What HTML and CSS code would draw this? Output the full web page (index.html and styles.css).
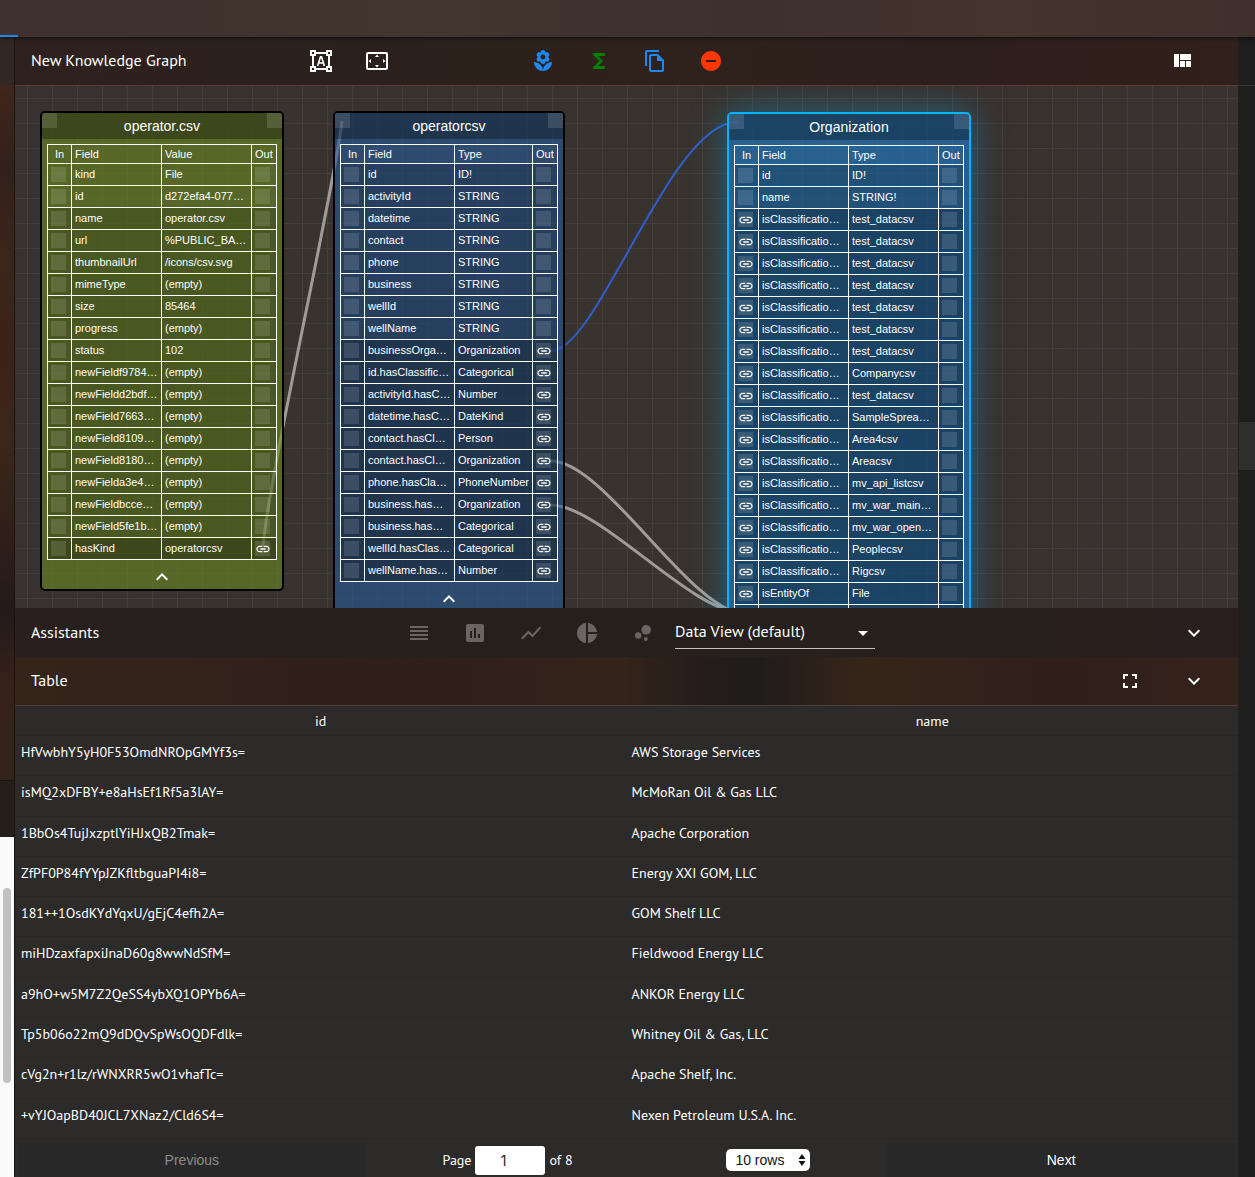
FILE: index.html
```html
<!DOCTYPE html>
<html lang="en">
<head>
<meta charset="utf-8">
<title>New Knowledge Graph</title>
<link rel="stylesheet" href="styles.css">
</head>
<body>
<svg class="sprite" aria-hidden="true">
  <symbol id="i-shape" viewBox="0 0 24 24"><path fill="none" stroke="currentColor" stroke-width="2" d="M2 2h4v4H2zM18 2h4v4h-4zM2 18h4v4H2zM18 18h4v4h-4zM6 4h12M6 20h12M4 6v12M20 6v12"/><path fill="none" stroke="currentColor" stroke-width="1.6" d="M8.600 17 11.500 7.800h1L15.400 17M9.700 14h4.600"/></symbol>
  <symbol id="i-overscan" viewBox="0 0 24 24"><path d="M12.010 5.500L10 8h4l-1.990-2.500zM18 10v4l2.500-1.990L18 10zM6 10l-2.500 2.010L6 14v-4zm8 6h-4l2.010 2.500L14 16zm7-13H3c-1.100 0-2 .9-2 2v14c0 1.100.9 2 2 2h18c1.100 0 2-.9 2-2V5c0-1.100-.9-2-2-2zm0 16.010H3V4.990h18v14.020z"/></symbol>
  <symbol id="i-flower" viewBox="0 0 24 24"><path d="M12 22c4.970 0 9-4.030 9-9-4.970 0-9 4.030-9 9zM5.600 10.250c0 1.380 1.120 2.500 2.500 2.500.53 0 1.010-.16 1.420-.44l-.02.19c0 1.380 1.120 2.500 2.500 2.500s2.500-1.120 2.500-2.500l-.02-.19c.4.28.89.44 1.420.44 1.380 0 2.500-1.120 2.500-2.500 0-1-.59-1.850-1.430-2.250.84-.4 1.430-1.250 1.430-2.250 0-1.380-1.120-2.500-2.500-2.500-.53 0-1.010.16-1.420.44l.02-.19C14.500 2.120 13.380 1 12 1S9.500 2.120 9.500 3.500l.02.19c-.4-.28-.89-.44-1.420-.44-1.380 0-2.500 1.120-2.500 2.500 0 1 .59 1.850 1.430 2.250-.84.4-1.430 1.250-1.430 2.250zM12 5.500c1.380 0 2.500 1.120 2.500 2.500s-1.120 2.500-2.500 2.500S9.500 9.380 9.500 8s1.120-2.500 2.500-2.500zM3 13c0 4.970 4.030 9 9 9 0-4.970-4.030-9-9-9z"/></symbol>
  <symbol id="i-sum" viewBox="0 0 24 24"><path d="M18 4H6v2l6.500 6L6 18v2h12v-3h-7l5-5-5-5h7z"/></symbol>
  <symbol id="i-copy" viewBox="0 0 24 24"><path d="M16 1H4c-1.100 0-2 .9-2 2v14h2V3h12V1zm-1 4H8c-1.100 0-1.990.9-1.990 2L6 21c0 1.100.89 2 1.990 2H19c1.100 0 2-.9 2-2V11l-6-6zM8 21V7h6v5h5v9H8z"/></symbol>
  <symbol id="i-remove" viewBox="0 0 24 24"><path d="M12 2C6.480 2 2 6.480 2 12s4.480 10 10 10 10-4.480 10-10S17.520 2 12 2zm5 11H7v-2h10v2z"/></symbol>
  <symbol id="i-quilt" viewBox="0 0 24 24"><path d="M10 18h5v-6h-5v6zm-6 0h5V5H4v13zm12 0h5v-6h-5v6zM10 5v6h11V5H10z"/></symbol>
  <symbol id="i-lines" viewBox="0 0 24 24"><path d="M3 15h18v-2H3v2zm0 4h18v-2H3v2zm0-8h18V9H3v2zm0-6v2h18V5H3z"/></symbol>
  <symbol id="i-bars" viewBox="0 0 24 24"><path d="M19 3H5c-1.100 0-2 .9-2 2v14c0 1.100.9 2 2 2h14c1.100 0 2-.9 2-2V5c0-1.100-.9-2-2-2zM9 17H7v-7h2v7zm4 0h-2V7h2v10zm4 0h-2v-4h2v4z"/></symbol>
  <symbol id="i-trend" viewBox="0 0 24 24"><path d="M3.500 18.490l6-6.010 4 4L22 6.920l-1.410-1.410-7.090 7.970-4-4L2 16.990z"/></symbol>
  <symbol id="i-pie" viewBox="0 0 24 24"><path d="M11 2v20c-5.070-.5-9-4.790-9-10s3.930-9.500 9-10zm2.030 0v8.990H22c-.47-4.740-4.240-8.520-8.970-8.990zm0 11.010V22c4.740-.47 8.500-4.250 8.970-8.990h-8.970z"/></symbol>
  <symbol id="i-bubbles" viewBox="0 0 24 24"><circle cx="7.200" cy="14.400" r="3.200"/><circle cx="14.800" cy="18" r="2"/><circle cx="15.200" cy="8.800" r="4.800"/></symbol>
  <symbol id="i-full" viewBox="0 0 24 24"><path d="M7 14H5v5h5v-2H7v-3zm-2-4h2V7h3V5H5v5zm12 7h-3v2h5v-5h-2v3zM14 5v2h3v3h2V5h-5z"/></symbol>
  <symbol id="i-more" viewBox="0 0 24 24"><path d="M16.590 8.590L12 13.170 7.410 8.590 6 10l6 6 6-6z"/></symbol>
  <symbol id="i-less" viewBox="0 0 24 24"><path d="M12 8l-6 6 1.410 1.410L12 10.830l4.590 4.580L18 14z"/></symbol>
  <symbol id="i-drop" viewBox="0 0 24 24"><path d="M7 10l5 5 5-5z"/></symbol>
  <symbol id="i-link" viewBox="0 0 24 24"><path d="M3.900 12c0-1.710 1.390-3.100 3.100-3.100h4V7H7c-2.760 0-5 2.240-5 5s2.240 5 5 5h4v-1.900H7c-1.710 0-3.100-1.390-3.100-3.100zM8 13h8v-2H8v2zm9-6h-4v1.900h4c1.710 0 3.100 1.390 3.100 3.100s-1.390 3.100-3.100 3.100h-4V17h4c2.760 0 5-2.240 5-5s-2.240-5-5-5z"/></symbol>
</svg>

<div class="app">
  <div class="topbar"><span class="tab-ink"></span></div>
  <div class="body">
    <aside class="left">
      <div class="left-head"></div>
      <div class="left-main"></div>
      <div class="left-foot"></div>
      <div class="left-list"><span class="thumb"></span></div>
    </aside>

    <main class="main">
      <header class="bar graph-bar">
        <h1 class="title">New Knowledge Graph</h1>
        <div class="tools">
          <button class="icon" aria-label="Select nodes"><svg><use href="#i-shape"/></svg></button>
          <button class="icon" aria-label="Fit to view"><svg><use href="#i-overscan"/></svg></button>
        </div>
        <div class="tools edit-tools">
          <button class="icon blue" aria-label="Add entity"><svg><use href="#i-flower"/></svg></button>
          <button class="icon green" aria-label="Add function"><svg><use href="#i-sum"/></svg></button>
          <button class="icon blue" aria-label="Copy"><svg><use href="#i-copy"/></svg></button>
          <button class="icon red" aria-label="Remove"><svg><use href="#i-remove"/></svg></button>
        </div>
        <button class="icon end" aria-label="Change layout"><svg><use href="#i-quilt"/></svg></button>
      </header>

      <section class="canvas" aria-label="Graph">
        <svg class="edges" aria-hidden="true">
          <path d="M248 460C255 384 322 89 327 35"/>
          <path class="active" d="M536 265C583 265 655 36 722 36"/>
          <path d="M536 375C590 375 675 526 730 528"/>
          <path d="M536 419C585 419 675 526 730 528"/>
        </svg>
        <div class="node file" id="node-file"></div>
        <div class="node kind" id="node-kind"></div>
        <div class="node selected" id="node-organization"></div>
      </section>

      <div class="bar assistants">
        <h2 class="title">Assistants</h2>
        <div class="tools views">
          <button class="icon dim" aria-label="Table view"><svg><use href="#i-lines"/></svg></button>
          <button class="icon dim" aria-label="Bar chart"><svg><use href="#i-bars"/></svg></button>
          <button class="icon dim" aria-label="Line chart"><svg><use href="#i-trend"/></svg></button>
          <button class="icon dim" aria-label="Pie chart"><svg><use href="#i-pie"/></svg></button>
          <button class="icon dim" aria-label="Bubble chart"><svg><use href="#i-bubbles"/></svg></button>
        </div>
        <div class="view-select">
          <select aria-label="View"><option>Data View (default)</option></select>
          <svg><use href="#i-drop"/></svg>
        </div>
        <button class="icon end" aria-label="Collapse assistants"><svg><use href="#i-more"/></svg></button>
      </div>

      <div class="bar table-bar">
        <h2 class="title">Table</h2>
        <button class="icon end" aria-label="Full screen"><svg><use href="#i-full"/></svg></button>
        <button class="icon" aria-label="Collapse table"><svg><use href="#i-more"/></svg></button>
      </div>

      <section class="data">
        <table class="records">
          <thead><tr><th>id</th><th>name</th></tr></thead>
          <tbody>
            <tr><td>HfVwbhY5yH0F53OmdNROpGMYf3s=</td><td>AWS Storage Services</td></tr>
            <tr><td>isMQ2xDFBY+e8aHsEf1Rf5a3lAY=</td><td>McMoRan Oil &amp; Gas LLC</td></tr>
            <tr><td>1BbOs4TujJxzptlYiHJxQB2Tmak=</td><td>Apache Corporation</td></tr>
            <tr><td>ZfPF0P84fYYpJZKfltbguaPI4i8=</td><td>Energy XXI GOM, LLC</td></tr>
            <tr><td>181++1OsdKYdYqxU/gEjC4efh2A=</td><td>GOM Shelf LLC</td></tr>
            <tr><td>miHDzaxfapxiJnaD60g8wwNdSfM=</td><td>Fieldwood Energy LLC</td></tr>
            <tr><td>a9hO+w5M7Z2QeSS4ybXQ1OPYb6A=</td><td>ANKOR Energy LLC</td></tr>
            <tr><td>Tp5b06o22mQ9dDQvSpWsOQDFdlk=</td><td>Whitney Oil &amp; Gas, LLC</td></tr>
            <tr><td>cVg2n+r1lz/rWNXRR5wO1vhafTc=</td><td>Apache Shelf, Inc.</td></tr>
            <tr><td>+vYJOapBD40JCL7XNaz2/Cld6S4=</td><td>Nexen Petroleum U.S.A. Inc.</td></tr>
          </tbody>
        </table>
        <div class="pager">
          <button class="page-btn" disabled>Previous</button>
          <div class="pager-mid">
            <label class="page-info">Page <input type="text" value="1"> of 8</label>
            <div class="rows-select">
              <select aria-label="Rows per page"><option>10 rows</option></select>
              <svg viewBox="0 0 8 14"><path d="M4 1 7.500 6h-7zM4 13 .5 8h7z"/></svg>
            </div>
          </div>
          <button class="page-btn">Next</button>
        </div>
      </section>
    </main>

    <aside class="right">
      <div class="right-head"></div>
      <div class="right-main"><span class="handle"></span></div>
    </aside>
  </div>
</div>
<script src="app.js"></script>
</body>
</html>
```
FILE: styles.css
```css
* { box-sizing: border-box; }

body {
  margin: 0;
  background: #1e1e1e;
  color: #fff;
  font-family: "PT Sans", "Open Sans", sans-serif;
}

h1, h2 { margin: 0; font-weight: 400; }

button, select, input { font: inherit; color: inherit; }

button { border: 0; background: none; padding: 0; }

svg { fill: currentColor; }

.sprite { display: none; }

.app {
  display: flex;
  flex-direction: column;
  height: 100vh;
  overflow: hidden;
}

.topbar {
  position: relative;
  z-index: 1;
  display: flex;
  align-items: flex-end;
  flex: 0 0 37px;
  background: linear-gradient(90deg, #3f312e, #42342e 35%, #3e302e 60%, #43342e 80%, #40302d);
  box-shadow: 0 1px 4px rgba(0, 0, 0, .6);
}

.tab-ink { width: 18px; height: 2px; background: #1e88e5; }

.body { display: flex; flex: 1; min-height: 0; }

/* Side panels */
.left {
  display: flex;
  flex-direction: column;
  flex: 0 0 15px;
  border-right: 1px solid #1c1412;
}

.left-head { flex: 0 0 48px; background: #322723; }

.left-main {
  flex: 1;
  background: linear-gradient(#40261c, #33201b 12%, #3a261a 25%, #3d2219 40%, #3b2719 52%, #2f1e1a 66%, #231a19 76%, #37211a 86%, #33231a);
}

.left-foot { flex: 0 0 57px; background: #241f1b; border-top: 1px solid #1a1614; }

.left-list { flex: 0 0 340px; padding: 51px 3px 0; background: #fafafa; }

.thumb { display: block; height: 195px; width: 8px; border-radius: 4px; background: #c1c1c1; }

.right { display: flex; flex-direction: column; flex: 0 0 17px; border-left: 1px solid #2b1d1a; background: #1e1e1e; }

.right-head { flex: 0 0 49px; border-bottom: 1px solid #383838; }

.right-main { flex: 1; padding-top: 336px; }

.handle { display: block; height: 48px; background: #2e2e2e; }

/* Main column */
.main { display: flex; flex-direction: column; flex: 1; min-width: 0; }

.bar { display: flex; align-items: center; flex: 0 0 49px; padding: 0 16px; }

.title { padding-bottom: 2px; font-size: 16px; line-height: 24px; }

.graph-bar {
  border-bottom: 1px solid #5a3c35;
  background: linear-gradient(90deg, #2f221e, #2c201c 30%, #2f221c 55%, #2d1f1c 75%, #31201c);
}

.graph-bar .title { flex: 0 0 262px; }

.graph-bar .end { margin-right: 12px; }

.tools { display: flex; }

.edit-tools { margin-left: 110px; }

.icon { display: flex; align-items: center; justify-content: center; width: 56px; height: 48px; }

.icon svg, .view-select svg { width: 24px; height: 24px; }

.blue { color: #1e88f0; }
.green { color: #008000; }
.red { color: #ff3705; }
.dim { color: #6a6563; }
.end { margin-left: auto; }

.assistants { background: linear-gradient(90deg, #281f1e, #25201c 35%, #26201c 60%, #291f1e); }

.assistants .title { flex: 0 0 360px; }

.view-select { position: relative; width: 200px; margin-left: 4px; }

.view-select select {
  appearance: none;
  width: 100%;
  height: 32px;
  padding: 0 24px 3px 0;
  border: 0;
  border-bottom: 1px solid #c4c2c1;
  border-radius: 0;
  background: none;
  font-size: 16px;
}

.view-select svg { position: absolute; right: 0; top: 4px; pointer-events: none; }

.table-bar {
  gap: 8px;
  border-bottom: 1px solid #4b4039;
  background: linear-gradient(90deg, #34241a, #32221a 15%, #2f1f1b 30%, #33231a 50%, #251d1b 56%, #1f1c1b 60%, #291e1b 64%, #35261a 69%, #301f1b 85%, #35221a);
}

/* Graph canvas */
.canvas {
  position: relative;
  flex: 1;
  min-height: 0;
  overflow: hidden;
  background:
    linear-gradient(90deg, #433e3b 1px, transparent 1px) 12px 0 / 25px 25px,
    linear-gradient(#433e3b 1px, transparent 1px) 0 12px / 25px 25px,
    linear-gradient(90deg, #37322f, #38332e 45%, #39312e 80%, #383230);
}

.edges { position: absolute; inset: 0; width: 100%; height: 100%; fill: none; stroke: #a09b99; stroke-width: 3; }

.edges .active { stroke: #2e5fcc; stroke-width: 2; }

.node {
  position: absolute;
  border: 2px solid #000;
  border-radius: 5px;
  font-family: "Liberation Sans", Arial, sans-serif;
}

.file { left: 25px; top: 25px; background: rgba(106, 138, 35, .6); }
.kind { left: 318px; top: 25px; background: rgba(39, 91, 155, .6); }
.selected {
  left: 712px;
  top: 26px;
  border-color: #00b4ff;
  background: rgba(30, 127, 207, .6);
  box-shadow: 0 0 36px rgba(0, 180, 255, .4);
}

.node-head {
  display: flex;
  justify-content: space-between;
  height: 26px;
  background: rgba(0, 0, 0, .3);
  font-size: 14px;
  line-height: 26px;
}

.port { display: block; width: 15px; height: 15px; background: rgba(255, 255, 255, .13); }

.port svg { display: block; width: 16px; height: 16px; }

.fields { margin: 5px; border-spacing: 0; table-layout: fixed; width: 230px; border: solid #fff; border-width: 1px 0 0 1px; font-size: 11px; }

.kind .fields { width: 218px; }

.fields th, .fields td {
  overflow: hidden;
  height: 22px;
  padding: 0 0 1px 3px;
  border: solid #fff;
  border-width: 0 1px 1px 0;
  font-weight: 400;
  line-height: 20px;
  text-align: left;
  white-space: nowrap;
}

.fields .link { padding-bottom: 0; }

.fields th { height: 19px; padding-bottom: 0; line-height: 18px; }

.fields .c-in { width: 24px; }
.fields .c-out { width: 25px; }
.fields .c-type { width: 90px; }
.kind .c-type { width: 78px; }

.fields th.c-in { padding: 0; text-align: center; }

.fields .mid { background: rgba(0, 0, 0, .15); }
.fields .dark { background: rgba(0, 0, 0, .3); }

.fold { display: flex; align-items: center; justify-content: center; width: 100%; height: 24px; }

.fold svg { width: 24px; height: 24px; }

/* Records */
.data { flex: none; background: #2c2b2a; font-size: 14px; }

.records { width: 100%; height: 433px; border-spacing: 0; table-layout: fixed; }

.records th { height: 30px; padding: 1px 5px 0; border-bottom: 1px solid #282727; font-weight: 400; }

.records td { padding: 6px 5px 0; border-bottom: 1px solid #292827; line-height: 20px; vertical-align: top; }

.records td:first-child { padding-left: 6px; }

.pager {
  display: grid;
  grid-template-columns: 2fr 3fr 2fr;
  height: 38px;
  padding: 4px 3px 0;
}

.page-btn {
  border-radius: 3px;
  background: #282828;
  font-family: "Liberation Sans", Arial, sans-serif;
  font-size: 14px;
}

.page-btn:disabled { color: #8c8c8c; }

.pager-mid { display: flex; align-items: center; justify-content: space-around; }

.page-info { display: flex; align-items: center; gap: 4px; }

.page-info input {
  width: 70px;
  height: 29px;
  padding: 0 14px 0 0;
  border: 0;
  border-radius: 3px;
  background: #fff;
  color: #222;
  font-family: Inter, sans-serif;
  font-size: 14px;
  text-align: center;
}

.rows-select { position: relative; color: #111; }

.rows-select select {
  appearance: none;
  width: 84px;
  height: 22px;
  padding: 0 9px;
  border: 0;
  border-radius: 5px;
  background: #fff;
  font-family: "Liberation Sans", Arial, sans-serif;
  font-size: 14px;
}

.rows-select svg { position: absolute; right: 4px; top: 4px; width: 8px; height: 14px; pointer-events: none; }
```
FILE: app.js
```js
const empties = ['newFieldf9784…', 'newFieldd2bdf…', 'newField7663…', 'newField8109…', 'newField8180…',
  'newFielda3e4…', 'newFieldbcce…', 'newField5fe1b…'].map(name => [name, '(empty)', '', '', 'mid']);

const classified = ['test_datacsv', 'test_datacsv', 'test_datacsv', 'test_datacsv', 'test_datacsv', 'test_datacsv',
  'test_datacsv', 'Companycsv', 'test_datacsv', 'SampleSprea…', 'Area4csv', 'Areacsv', 'mv_api_listcsv',
  'mv_war_main…', 'mv_war_open…', 'Peoplecsv', 'Rigcsv'].map(type => ['isClassificatio…', type, 'in', '', 'dark']);

// Row: name, value or type, linked ports, shade
const nodes = {
  'node-file': {
    title: 'operator.csv', column: 'Value', rows: [
      ['kind', 'File', '', '', ''],
      ['id', 'd272efa4-077…', '', '', ''],
      ['name', 'operator.csv', '', '', 'mid'],
      ['url', '%PUBLIC_BA…', '', '', 'mid'],
      ['thumbnailUrl', '/icons/csv.svg', '', '', 'mid'],
      ['mimeType', '(empty)', '', '', 'mid'],
      ['size', '85464', '', '', 'mid'],
      ['progress', '(empty)', '', '', 'mid'],
      ['status', '102', '', '', 'mid'],
      ...empties,
      ['hasKind', 'operatorcsv', '', 'out', 'dark'],
    ],
  },
  'node-kind': {
    title: 'operatorcsv', column: 'Type', rows: [
      ['id', 'ID!', '', '', 'mid'],
      ['activityId', 'STRING', '', '', 'mid'],
      ['datetime', 'STRING', '', '', 'mid'],
      ['contact', 'STRING', '', '', 'mid'],
      ['phone', 'STRING', '', '', 'mid'],
      ['business', 'STRING', '', '', 'mid'],
      ['wellId', 'STRING', '', '', 'mid'],
      ['wellName', 'STRING', '', '', 'mid'],
      ['businessOrga…', 'Organization', '', 'out', 'dark'],
      ['id.hasClassific…', 'Categorical', '', 'out', 'dark'],
      ['activityId.hasC…', 'Number', '', 'out', 'dark'],
      ['datetime.hasC…', 'DateKind', '', 'out', 'dark'],
      ['contact.hasCl…', 'Person', '', 'out', 'dark'],
      ['contact.hasCl…', 'Organization', '', 'out', 'dark'],
      ['phone.hasCla…', 'PhoneNumber', '', 'out', 'dark'],
      ['business.has…', 'Organization', '', 'out', 'dark'],
      ['business.has…', 'Categorical', '', 'out', 'dark'],
      ['wellId.hasClas…', 'Categorical', '', 'out', 'dark'],
      ['wellName.has…', 'Number', '', 'out', 'dark'],
    ],
  },
  'node-organization': {
    title: 'Organization', column: 'Type', rows: [
      ['id', 'ID!', '', '', 'mid'],
      ['name', 'STRING!', '', '', 'mid'],
      ...classified,
      ['isEntityOf', 'File', 'in', '', 'dark'],
      ['', '', '', '', 'dark'],
    ],
  },
};

const port = linked => `<span class="port">${linked ? '<svg><use href="#i-link"/></svg>' : ''}</span>`;

for (const [id, node] of Object.entries(nodes)) {
  const rows = node.rows.map(([name, value, input, output, shade]) =>
    `<tr class="${shade}"><td class="link">${port(input)}</td><td>${name}</td><td>${value}</td><td class="link">${port(output)}</td></tr>`).join('');
  document.getElementById(id).innerHTML = `
    <div class="node-head">${port('')}<span>${node.title}</span>${port('')}</div>
    <table class="fields">
      <thead><tr><th class="c-in">In</th><th>Field</th><th class="c-type">${node.column}</th><th class="c-out">Out</th></tr></thead>
      <tbody>${rows}</tbody>
    </table>
    <button class="fold" aria-label="Fold"><svg><use href="#i-less"/></svg></button>`;
}
```
